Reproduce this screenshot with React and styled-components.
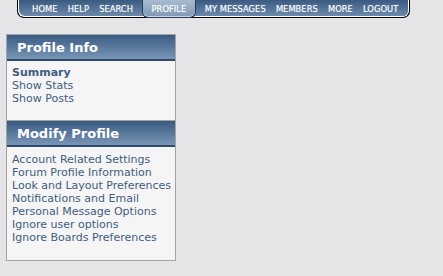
import React from 'react';
import styled, { createGlobalStyle } from 'styled-components';

const GlobalStyle = createGlobalStyle`
  html, body {
    margin: 0;
    padding: 0;
    background: #e5e5e8;
  }
  body {
    font-family: "DejaVu Sans", Verdana, sans-serif;
  }
`;

const Page = styled.div`
  width: 443px;
  height: 276px;
  overflow: hidden;
`;

const NavBar = styled.ul`
  display: flex;
  align-items: stretch;
  margin: 0 0 0 17px;
  padding: 0 0 0 9px;
  width: 382px;
  height: 17px;
  list-style: none;
  border: 1px solid #000;
  border-top: none;
  border-radius: 0 0 7px 7px;
  box-shadow: inset 1px -1px 0 #fff, inset -1px 0 0 #fff;
  background: linear-gradient(#3a5a80, #6e8cae);
`;

const NavItem = styled.li`
  display: flex;
  align-items: center;
  padding: 0 ${(p) => (p.active ? 9 : 5.1)}px;
  margin: 0 ${(p) => (p.active ? 3.5 : 0)}px;
  font-family: "DejaVu Sans Condensed", "DejaVu Sans", sans-serif;
  font-size: 9.3px;
  color: #fff;
  text-shadow: 0 0 1px rgba(255, 255, 255, 0.5);
  white-space: nowrap;
  ${(p) =>
    p.active &&
    `
    margin-top: -1px;
    height: 18px;
    border: 1px solid #2a3c55;
    border-top: none;
    border-radius: 0 0 6px 6px;
    background: linear-gradient(#a9bdd2, #7f98b6);
    box-shadow: inset 0 -1px 0 #c9d6e4;
  `}
`;

const Sidebar = styled.div`
  display: flex;
  flex-direction: column;
  margin: 16px 0 0 6px;
  width: 168px;
  border: 1px solid #a3a3a3;
  background: #f5f5f5;
`;

const Header = styled.h3`
  margin: 0;
  height: 24px;
  padding-left: 10px;
  display: flex;
  align-items: center;
  font-size: 13px;
  font-weight: bold;
  color: #fff;
  background: linear-gradient(#3a5b82, #7995b6);
  border-bottom: 2px solid #2f4a6a;
  ${(p) => p.divided && 'border-top: 1px solid #a3a3a3;'}
`;

const LinkList = styled.ul`
  list-style: none;
  margin: 0;
  padding: ${(p) => p.pad};
`;

const LinkItem = styled.li`
  font-size: 11px;
  line-height: 13px;
  color: #3f5d80;
  font-weight: ${(p) => (p.bold ? 'bold' : 'normal')};
  white-space: nowrap;
`;

const navItems = ['HOME', 'HELP', 'SEARCH', 'PROFILE', 'MY MESSAGES', 'MEMBERS', 'MORE', 'LOGOUT'];

export default function App() {
  return (
    <Page>
      <GlobalStyle />
      <NavBar>
        {navItems.map((n) => (
          <NavItem key={n} active={n === 'PROFILE'}>
            {n}
          </NavItem>
        ))}
      </NavBar>
      <Sidebar>
        <Header>Profile Info</Header>
        <LinkList pad="5px 5px 15px">
          <LinkItem bold>Summary</LinkItem>
          <LinkItem>Show Stats</LinkItem>
          <LinkItem>Show Posts</LinkItem>
        </LinkList>
        <Header divided>Modify Profile</Header>
        <LinkList pad="6px 5px 16px">
          <LinkItem>Account Related Settings</LinkItem>
          <LinkItem>Forum Profile Information</LinkItem>
          <LinkItem>Look and Layout Preferences</LinkItem>
          <LinkItem>Notifications and Email</LinkItem>
          <LinkItem>Personal Message Options</LinkItem>
          <LinkItem>Ignore user options</LinkItem>
          <LinkItem>Ignore Boards Preferences</LinkItem>
        </LinkList>
      </Sidebar>
    </Page>
  );
}
